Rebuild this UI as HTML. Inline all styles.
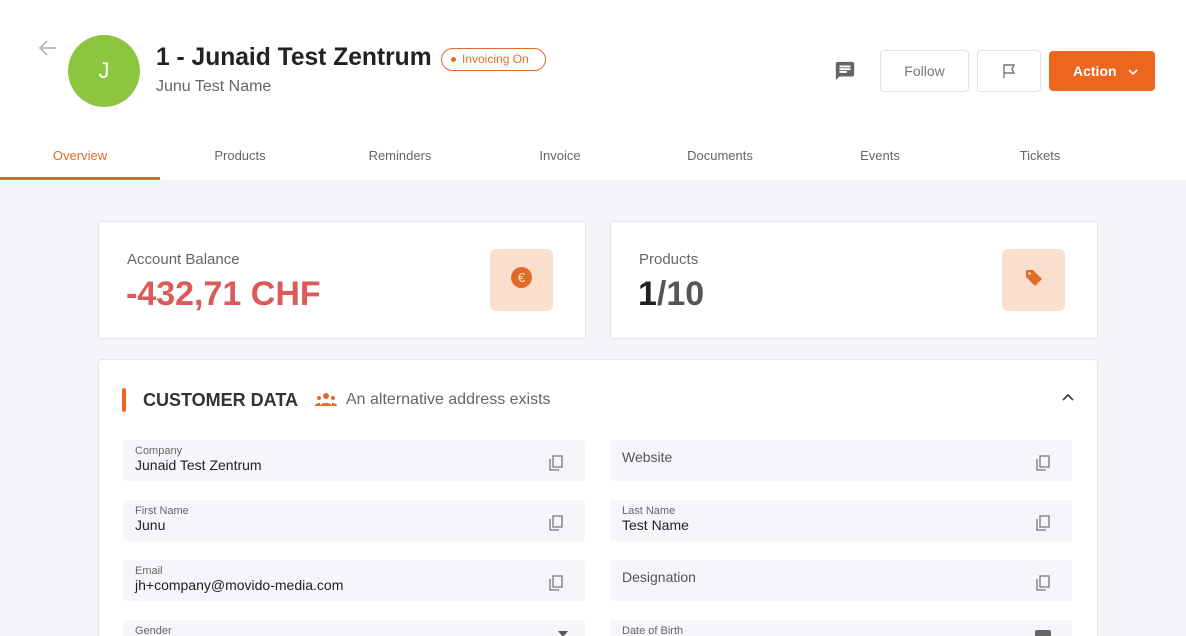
<!DOCTYPE html>
<html><head><meta charset="utf-8"><style>
*{box-sizing:border-box;margin:0;padding:0}
html,body{width:1186px;height:636px;overflow:hidden}
body{background:#f3f5f8;font-family:"Liberation Sans",sans-serif;position:relative}
.abs{position:absolute}
.hdr{left:0;top:0;width:1186px;height:180px;background:#fff}
.tab{top:148px;width:160px;text-align:center;font-size:13px;color:#666}
.card{background:#fff;border:1px solid #e3e5ea;border-radius:4px}
.f{background:#f5f6f9;border-radius:3px;height:41px}
.lbl{position:absolute;left:12px;top:5px;font-size:11px;color:#666}
.val{position:absolute;left:12px;top:17px;font-size:14px;color:#222}
.ph{position:absolute;left:12px;top:9px;font-size:14px;color:#555}
.cp{position:absolute;right:22px;top:15px}
</style></head><body>
<div class="abs hdr"></div>
<svg class="abs" style="left:38px;top:39px" width="20" height="18" viewBox="0 0 20 18"><path d="M18 9H3M9 2L2 9l7 7" stroke="#bbb" stroke-width="1.8" fill="none"/></svg>
<div class="abs" style="left:68px;top:35px;width:72px;height:72px;border-radius:50%;background:#8cc63f;color:#fff;font-size:22px;text-align:center;line-height:72px">J</div>
<div class="abs" style="left:156px;top:44px;font-size:24.6px;font-weight:bold;color:#222">1 - Junaid Test Zentrum</div>
<div class="abs" style="left:441px;top:48px;width:105px;height:23px;border:1px solid #e36b2a;border-radius:12px;color:#e36b2a;font-size:12px;line-height:21px;padding-left:20px">Invoicing On<span style="position:absolute;left:9px;top:8px;width:5px;height:5px;border-radius:50%;background:#e36b2a"></span></div>
<div class="abs" style="left:156px;top:78px;font-size:16px;color:#666">Junu Test Name</div>
<svg class="abs" style="left:834px;top:60px" width="22" height="22" viewBox="0 0 24 24"><path d="M20 2H4c-1.1 0-2 .9-2 2v18l4-4h14c1.1 0 2-.9 2-2V4c0-1.1-.9-2-2-2zM6 9h12v2H6V9zm8 5H6v-2h8v2zm4-6H6V6h12v2z" fill="#666"/></svg>
<div class="abs" style="left:880px;top:50px;width:89px;height:42px;border:1px solid #dfe1e6;border-radius:4px;text-align:center;line-height:40px;font-size:14px;color:#777">Follow</div>
<div class="abs" style="left:977px;top:50px;width:64px;height:42px;border:1px solid #dfe1e6;border-radius:4px"></div>
<svg class="abs" style="left:1002px;top:63px" width="14" height="16" viewBox="0 0 14 16"><path d="M2 15V2h10l-2 4 2 4H2" stroke="#777" stroke-width="1.4" fill="none"/></svg>
<div class="abs" style="left:1049px;top:51px;width:106px;height:40px;background:#ec6620;border-radius:4px;color:#fff;font-size:14px;font-weight:bold;line-height:40px;padding-left:24px">Action</div>
<svg class="abs" style="left:1128px;top:69px" width="10" height="6" viewBox="0 0 10 6"><path d="M1 1l4 4 4-4" stroke="#fff" stroke-width="1.6" fill="none"/></svg>
<div class="abs tab" style="left:0;color:#e36b2a">Overview</div>
<div class="abs" style="left:0;top:177px;width:160px;height:3px;background:#d9693a"></div>
<div class="abs tab" style="left:160px">Products</div>
<div class="abs tab" style="left:320px">Reminders</div>
<div class="abs tab" style="left:480px">Invoice</div>
<div class="abs tab" style="left:640px">Documents</div>
<div class="abs tab" style="left:800px">Events</div>
<div class="abs tab" style="left:960px">Tickets</div>

<div class="abs card" style="left:98px;top:221px;width:488px;height:118px"></div>
<div class="abs" style="left:127px;top:251px;font-size:15px;color:#666">Account Balance</div>
<div class="abs" style="left:126px;top:275px;font-size:34px;font-weight:bold;color:#dc5a5a">-432,71 CHF</div>
<div class="abs" style="left:490px;top:249px;width:63px;height:62px;background:#fbdfcd;border-radius:6px"></div>
<div class="abs" style="left:511px;top:267px;width:21px;height:21px;border-radius:50%;background:#e36b2a;color:#fbdfcd;font-size:13px;text-align:center;line-height:21px">€</div>
<div class="abs card" style="left:610px;top:221px;width:488px;height:118px"></div>
<div class="abs" style="left:639px;top:251px;font-size:15px;color:#666">Products</div>
<div class="abs" style="left:638px;top:275px;font-size:34px;font-weight:bold;color:#555"><span style="color:#222">1</span>/10</div>
<div class="abs" style="left:1002px;top:249px;width:63px;height:62px;background:#fbdfcd;border-radius:6px"></div>
<svg class="abs" style="left:1024px;top:268px" width="20" height="20" viewBox="0 0 20 20"><path d="M2 3v6l9 9 7-7-9-9H3z" fill="#e36b2a"/><circle cx="5.5" cy="5.5" r="1.3" fill="#fbdfcd"/></svg>

<div class="abs card" style="left:98px;top:359px;width:1000px;height:300px"></div>
<div class="abs" style="left:122px;top:388px;width:4px;height:24px;background:#ec6620;border-radius:2px"></div>
<div class="abs" style="left:143px;top:390px;font-size:18px;font-weight:bold;color:#333">CUSTOMER DATA</div>
<svg class="abs" style="left:314px;top:392px" width="24" height="16" viewBox="0 0 24 16"><circle cx="12" cy="4" r="3" fill="#e36b2a"/><circle cx="5" cy="6" r="2" fill="#e36b2a"/><circle cx="19" cy="6" r="2" fill="#e36b2a"/><path d="M6 14c0-4 12-4 12 0zM1 14c0-3 5-3 5-3v3zM23 14c0-3-5-3-5-3v3z" fill="#e36b2a"/></svg>
<div class="abs" style="left:346px;top:391px;font-size:16px;color:#666">An alternative address exists</div>
<svg class="abs" style="left:1062px;top:393px" width="12" height="8" viewBox="0 0 12 8"><path d="M1 7l5-5 5 5" stroke="#444" stroke-width="1.8" fill="none"/></svg>

<div class="abs f" style="left:123px;top:440px;width:462px"><span class="lbl">Company</span><span class="val">Junaid Test Zentrum</span><svg class="cp" width="14" height="16" viewBox="0 0 14 16"><path d="M1 4v11h9M4 1h9v11H4z" stroke="#777" stroke-width="1.3" fill="none"/></svg></div>
<div class="abs f" style="left:610px;top:440px;width:462px"><span class="ph">Website</span><svg class="cp" width="14" height="16" viewBox="0 0 14 16"><path d="M1 4v11h9M4 1h9v11H4z" stroke="#777" stroke-width="1.3" fill="none"/></svg></div>
<div class="abs f" style="left:123px;top:500px;width:462px"><span class="lbl">First Name</span><span class="val">Junu</span><svg class="cp" width="14" height="16" viewBox="0 0 14 16"><path d="M1 4v11h9M4 1h9v11H4z" stroke="#777" stroke-width="1.3" fill="none"/></svg></div>
<div class="abs f" style="left:610px;top:500px;width:462px"><span class="lbl">Last Name</span><span class="val">Test Name</span><svg class="cp" width="14" height="16" viewBox="0 0 14 16"><path d="M1 4v11h9M4 1h9v11H4z" stroke="#777" stroke-width="1.3" fill="none"/></svg></div>
<div class="abs f" style="left:123px;top:560px;width:462px"><span class="lbl">Email</span><span class="val">jh+company@movido-media.com</span><svg class="cp" width="14" height="16" viewBox="0 0 14 16"><path d="M1 4v11h9M4 1h9v11H4z" stroke="#777" stroke-width="1.3" fill="none"/></svg></div>
<div class="abs f" style="left:610px;top:560px;width:462px"><span class="ph">Designation</span><svg class="cp" width="14" height="16" viewBox="0 0 14 16"><path d="M1 4v11h9M4 1h9v11H4z" stroke="#777" stroke-width="1.3" fill="none"/></svg></div>
<div class="abs f" style="left:123px;top:620px;width:462px"><span class="lbl">Gender</span><svg style="position:absolute;left:435px;top:11px" width="10" height="6"><path d="M0 0h10L5 6z" fill="#555"/></svg></div>
<div class="abs f" style="left:610px;top:620px;width:462px"><span class="lbl">Date of Birth</span><div style="position:absolute;left:425px;top:10px;width:16px;height:10px;background:#666;border-radius:2px"></div></div>
</body></html>
